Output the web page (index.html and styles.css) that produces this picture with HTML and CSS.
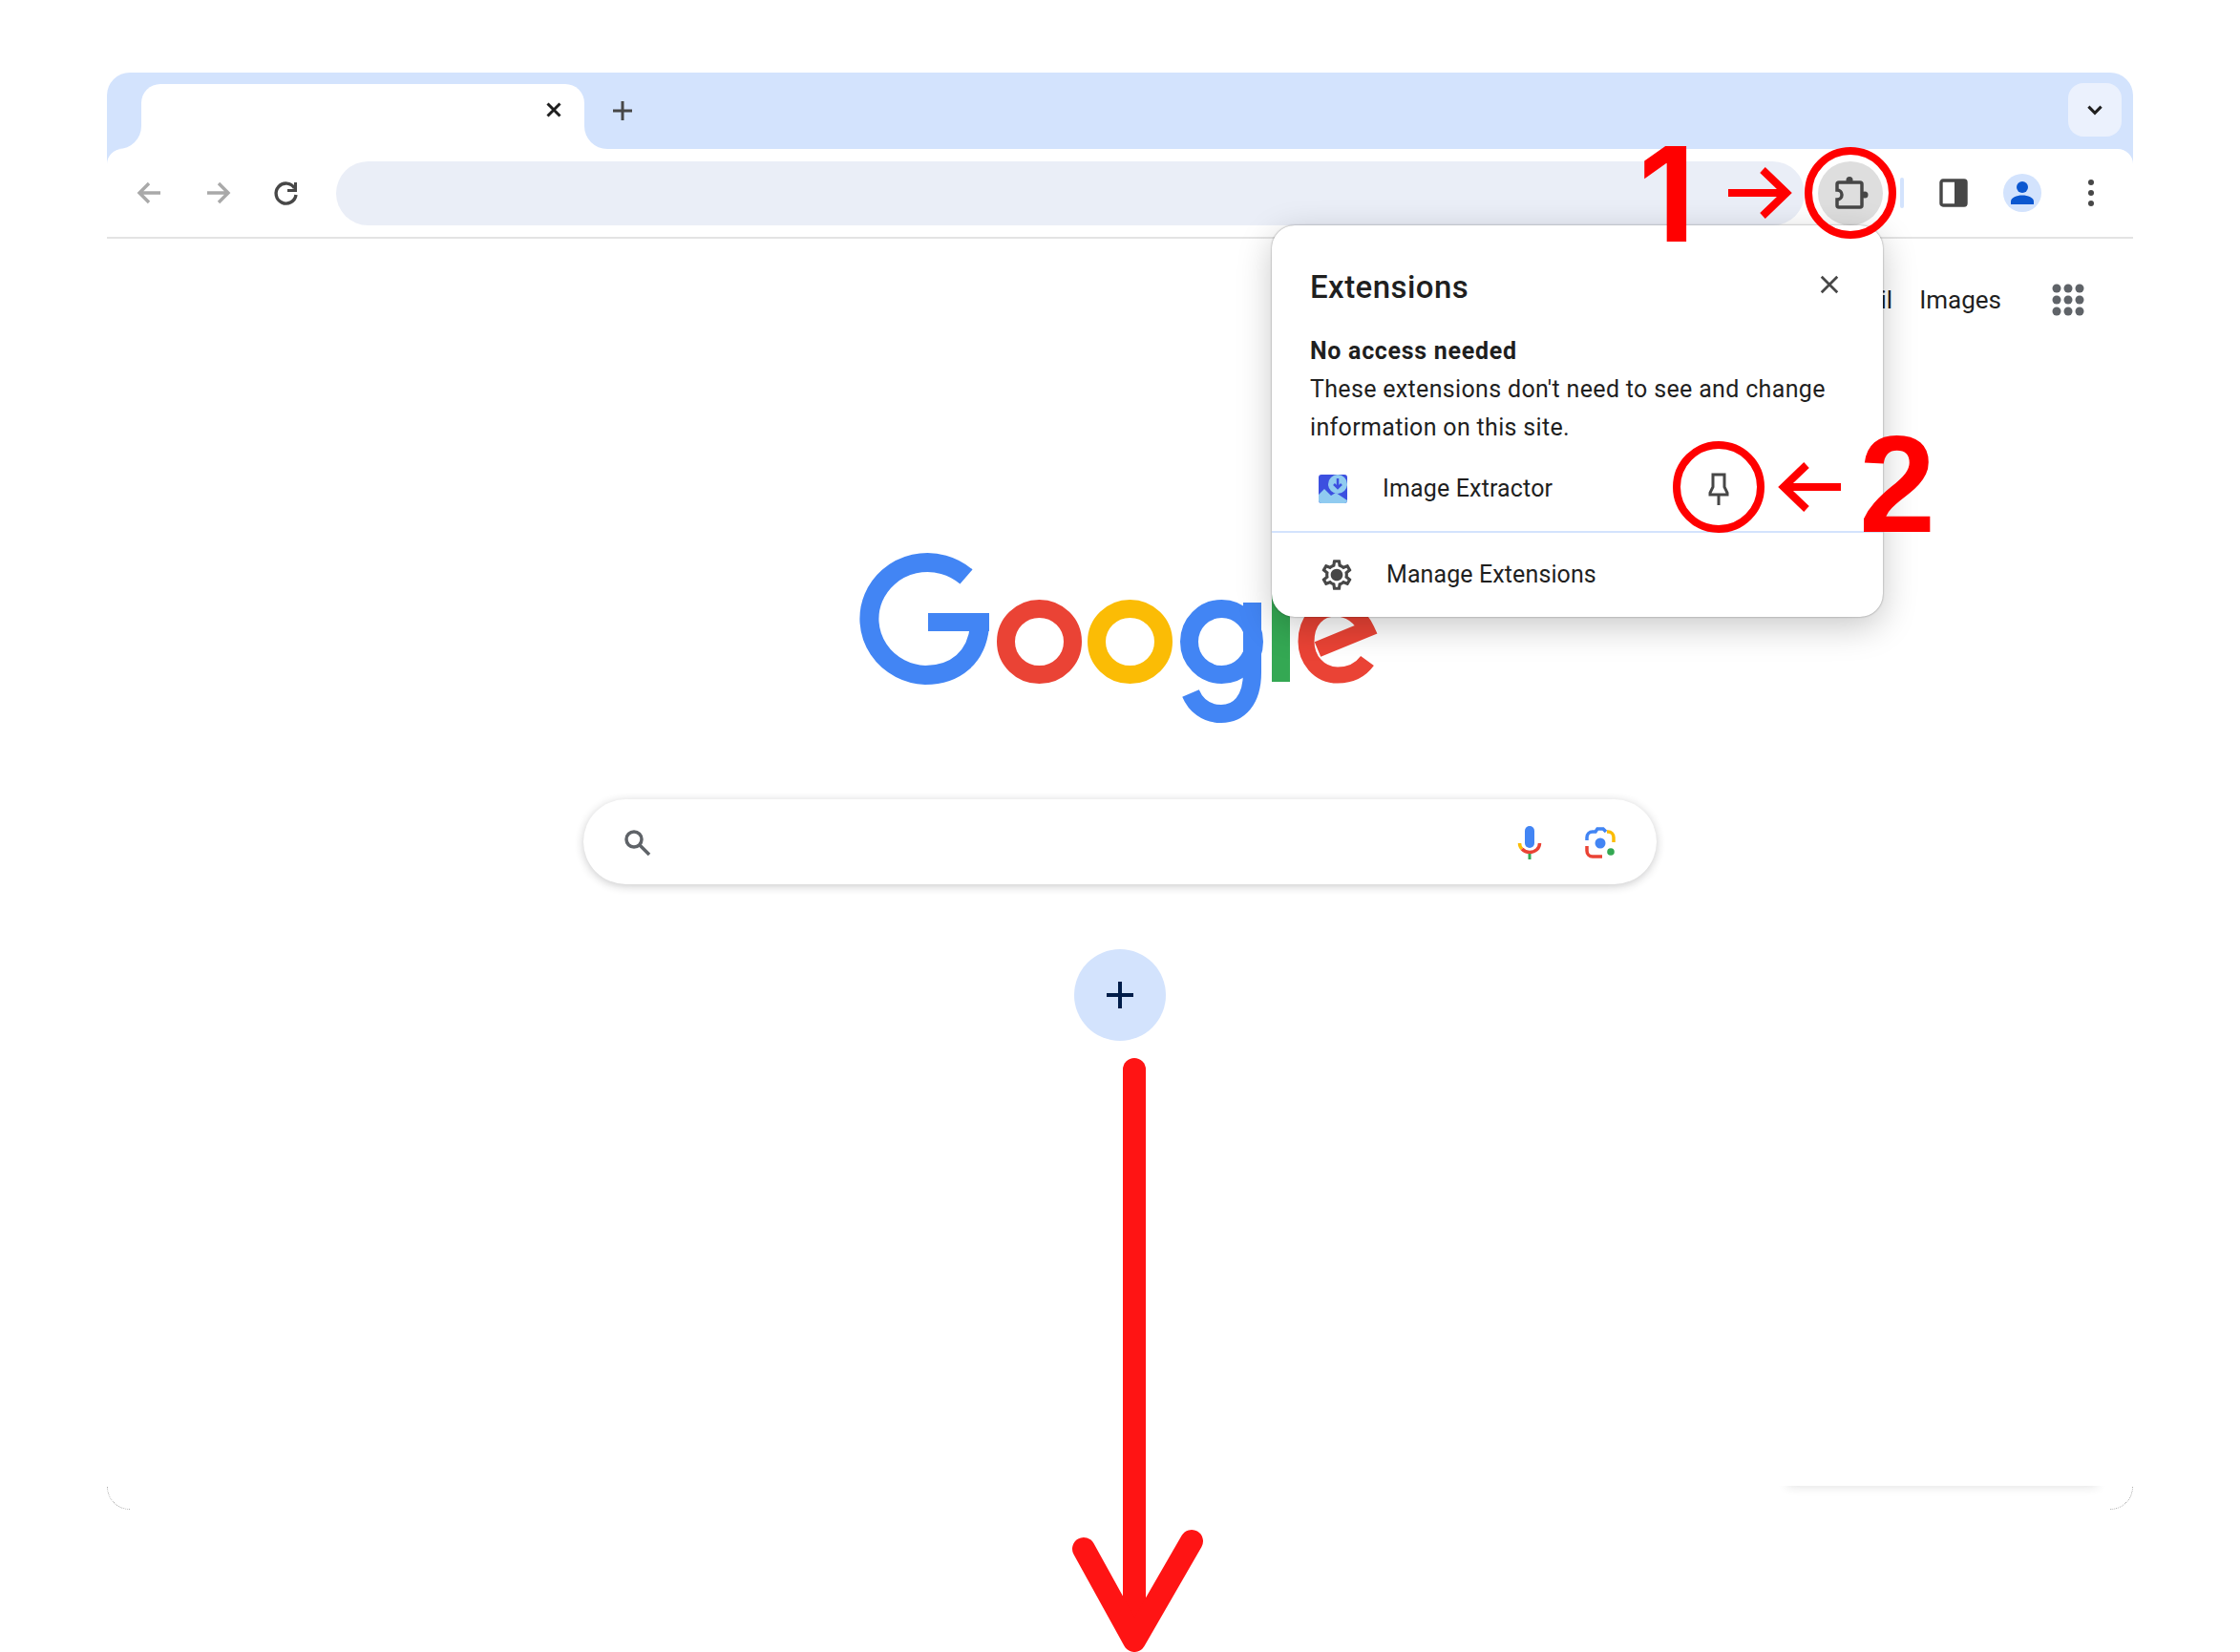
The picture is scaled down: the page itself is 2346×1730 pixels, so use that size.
FILE: index.html
```html
<!DOCTYPE html>
<html lang="en">
  <head>
    <meta charset="UTF-8" />
    <meta name="viewport" content="width=device-width, initial-scale=1.0" />
    <title>Pin an extension</title>
    <link rel="stylesheet" href="styles.css">
  </head>
  <body>
    <div class="window">
      <div class="chrome">
        <!-- Tab strip -->
        <div class="tabstrip">
          <div class="strip-left"></div>
          <div class="tab-slot">
            <div class="tab">
              <svg class="icon-close" viewBox="0 0 20 20"><path d="M3.5 3.5l13 13M16.5 3.5l-13 13" /></svg>
            </div>
          </div>
          <div class="strip-rest">
            <svg class="icon-plus" viewBox="0 0 24 24"><path d="M12 2v20M2 12h20" /></svg>
            <div class="tab-search">
              <svg viewBox="0 0 20 20"><path d="M4 7l6 6 6-6" /></svg>
            </div>
          </div>
        </div>

        <!-- Toolbar -->
        <div class="toolbar-back">
          <div class="toolbar">
            <div class="tool tool-disabled">
              <svg viewBox="0 0 32 32"><path d="M28 16H7M16 6L6 16l10 10" /></svg>
            </div>
            <div class="tool tool-disabled">
              <svg viewBox="0 0 32 32"><path d="M5 16h21M17 6l10 10-10 10" /></svg>
            </div>
            <div class="tool">
              <svg viewBox="0 0 32 32"><path d="M24.5 11A10.5 10.5 0 1 0 26 18" /><path class="solid" d="M27 5v10H17v-3h7V5z" /></svg>
            </div>
            <div class="omnibox"></div>
            <div class="extensions-btn">
              <svg viewBox="0 0 40 40">
                <path d="M8 9h22a2 2 0 0 1 2 2v22a2 2 0 0 1-2 2H8a2 2 0 0 1-2-2v-6a5 5 0 0 0 0-10v-6a2 2 0 0 1 2-2z" />
                <circle class="solid" cx="19" cy="6.5" r="3.5" />
                <circle class="solid" cx="35" cy="22" r="3.5" />
              </svg>
            </div>
            <div class="tool-sep"></div>
            <div class="tool">
              <svg viewBox="0 0 32 32">
                <rect x="3" y="3" width="26" height="26" rx="2" />
                <path class="solid" d="M17 2h10a3 3 0 0 1 3 3v22a3 3 0 0 1-3 3H17z" />
              </svg>
            </div>
            <div class="tool">
              <div class="avatar">
                <svg viewBox="0 0 40 40">
                  <circle cx="20" cy="14" r="6" />
                  <path d="M8 32v-3c0-4 6-6.500 12-6.500s12 2.500 12 6.500v3z" />
                </svg>
              </div>
            </div>
            <div class="tool">
              <svg viewBox="0 0 32 32">
                <circle class="solid" cx="16" cy="5" r="3" />
                <circle class="solid" cx="16" cy="16" r="3" />
                <circle class="solid" cx="16" cy="27" r="3" />
              </svg>
            </div>
          </div>
        </div>
      </div>

      <!-- New tab page -->
      <div class="ntp">
        <div class="ntp-nav">
          <span>Gmail</span>
          <span>Images</span>
          <svg class="apps" viewBox="0 0 48 48">
            <circle cx="12" cy="12" r="4.500" /><circle cx="24" cy="12" r="4.500" /><circle cx="36" cy="12" r="4.500" />
            <circle cx="12" cy="24" r="4.500" /><circle cx="24" cy="24" r="4.500" /><circle cx="36" cy="24" r="4.500" />
            <circle cx="12" cy="36" r="4.500" /><circle cx="24" cy="36" r="4.500" /><circle cx="36" cy="36" r="4.500" />
          </svg>
        </div>

        <svg class="logo" viewBox="0 0 546 184" role="img" aria-label="Google">
          <g fill="none">
            <path stroke="#4285f4" stroke-width="20" d="M115 28A61 59 0 1 0 72 131C104 131 126 112 129 80" />
            <path stroke="#4285f4" stroke-width="19" d="M139 75.500H75" />
            <ellipse stroke="#ea4335" stroke-width="19" cx="191.500" cy="96" rx="35" ry="34.500" />
            <ellipse stroke="#fbbc05" stroke-width="19" cx="286.500" cy="96" rx="35" ry="34.500" />
            <ellipse stroke="#4285f4" stroke-width="19" cx="382.500" cy="96" rx="34" ry="34.500" />
            <path stroke="#4285f4" stroke-width="19" d="M414.500 55V128C414.500 158 400 171.500 382 171.500C366 171.500 355 162 350 150" />
            <path stroke="#34a853" stroke-width="19" d="M444.500 14V138" />
            <path stroke="#ea4335" stroke-width="17" d="M535 116C527 127 516 131 504 131C484 131 471 114 471 96C471 74 484 61 502 61C516 61 528 70 534 83L483 104" />
          </g>
        </svg>

        <div class="searchbox">
          <svg class="icon-search" viewBox="0 0 40 40"><circle cx="17" cy="17" r="8" /><path d="M23 23l10 10" /></svg>
          <svg class="icon-mic" viewBox="0 0 40 40">
            <rect x="15" y="3" width="10" height="23" rx="5" fill="#4285f4" />
            <path stroke="#fbbc05" d="M9.500 21c0 2.500.6 4.200 2.500 6" />
            <path stroke="#ea4335" d="M12 27c2 2.300 5 3.500 8 3.500 6 0 10.500-4 10.500-9.500" />
            <rect x="18.500" y="32" width="3" height="6" fill="#34a853" />
          </svg>
          <svg class="icon-lens" viewBox="0 0 40 40">
            <path stroke="#4285f4" d="M6 18v-3c0-3.500 2.500-6 6-6h3l2-3h6l3 3" />
            <path stroke="#fbbc05" d="M27 9h1c3.500 0 6 2.500 6 6v5" />
            <path stroke="#ea4335" d="M6 24v5c0 3.500 2.500 6 6 6h10" />
            <circle cx="20" cy="21" r="5.500" fill="#4285f4" />
            <circle cx="31" cy="30" r="3.800" fill="#34a853" />
          </svg>
        </div>

        <div class="add-shortcut">
          <svg viewBox="0 0 28 28"><path d="M14 0v28M0 14h28" /></svg>
        </div>
      </div>

      <div class="customize"></div>
      <div class="corner corner-left"></div>
      <div class="corner corner-right"></div>

      <!-- Extensions menu -->
      <div class="popup">
        <div class="popup-head">
          <h2>Extensions</h2>
          <svg class="popup-close" viewBox="0 0 24 24"><path d="M3 3l18 18M21 3L3 21" /></svg>
        </div>
        <h3>No access needed</h3>
        <p>These extensions don't need to see and change<br />information on this site.</p>
        <div class="ext-row">
          <svg class="ext-icon" viewBox="0 0 30 30">
            <rect width="30" height="30" rx="3" fill="#3c50e0" />
            <path d="M0 27v-6l6-6 7 7 5-3 12 8v-1 1a3 3 0 0 1-3 3H3a3 3 0 0 1-3-3z" fill="#90cbf0" />
            <circle cx="20" cy="10" r="10" fill="#90cbf0" />
            <path d="M20 4v9M16 10l4 4 4-4" fill="none" stroke="#3c50e0" stroke-width="2.500" />
          </svg>
          <span>Image Extractor</span>
          <svg class="icon-pin" viewBox="0 0 40 40"><path d="M14 5h12v13l3 6v2H11v-2l3-6zM20 26v11" /></svg>
        </div>
        <div class="popup-divider"></div>
        <div class="manage-row">
          <svg class="icon-gear" viewBox="0 0 24 24"><path d="M19.430 12.980c.04-.32.07-.64.07-.98 0-.34-.03-.66-.07-.98l2.110-1.650c.19-.15.24-.42.12-.64l-2-3.460c-.09-.16-.26-.25-.44-.25-.06 0-.12.01-.17.03l-2.490 1c-.52-.4-1.080-.73-1.690-.98l-.38-2.650C14.460 2.180 14.250 2 14 2h-4c-.25 0-.46.18-.49.42l-.38 2.650c-.61.25-1.170.59-1.690.98l-2.490-1c-.06-.02-.12-.03-.18-.03-.17 0-.34.09-.43.25l-2 3.460c-.13.22-.07.49.12.64l2.110 1.650c-.04.32-.07.65-.07.98 0 .33.03.66.07.98l-2.110 1.650c-.19.15-.24.42-.12.64l2 3.460c.09.16.26.25.44.25.06 0 .12-.01.17-.03l2.490-1c.52.4 1.080.73 1.690.98l.38 2.650c.03.24.24.42.49.42h4c.25 0 .46-.18.49-.42l.38-2.650c.61-.25 1.170-.59 1.690-.98l2.490 1c.06.02.12.03.18.03.17 0 .34-.09.43-.25l2-3.460c.12-.22.07-.49-.12-.64l-2.110-1.650zm-1.980-1.710c.04.31.05.52.05.73 0 .21-.02.43-.05.73l-.14 1.130.89.7 1.080.84-.7 1.210-1.270-.51-1.040-.42-.9.68c-.43.32-.84.56-1.250.73l-1.060.43-.16 1.130-.2 1.350h-1.400l-.19-1.350-.16-1.130-1.060-.43c-.43-.18-.83-.41-1.230-.71l-.91-.7-1.060.43-1.270.51-.7-1.210 1.080-.84.89-.7-.14-1.130c-.03-.31-.05-.54-.05-.74s.02-.43.05-.73l.14-1.130-.89-.7-1.080-.84.7-1.210 1.270.51 1.040.42.9-.68c.43-.32.84-.56 1.250-.73l1.060-.43.16-1.130.2-1.350h1.390l.19 1.350.16 1.130 1.060.43c.43.18.83.41 1.230.71l.91.7 1.060-.43 1.270-.51.7 1.210-1.070.85-.89.7.14 1.130zM12 8c-2.210 0-4 1.790-4 4s1.790 4 4 4 4-1.790 4-4-1.790-4-4-4z" /></svg>
          <span>Manage Extensions</span>
        </div>
      </div>
    </div>

    <!-- Red annotations drawn on top of the screenshot -->
    <svg class="marks" viewBox="0 0 2346 1730">
      <circle cx="1938" cy="202" r="44" />
      <path d="M1810 202h60M1846 178l25 24-25 24" />
      <circle cx="1800" cy="510" r="44" />
      <path d="M1928 510h-60M1892 487l-24 23 24 23" />
      <path class="big-arrow" d="M1188 1120V1706" />
      <path class="big-arrow" d="M1135 1622l53 96 60-104" />
    </svg>
    <span class="step step-one">1</span>
    <span class="step step-two">2</span>
  </body>
</html>
```

FILE: styles.css
```css
body {
  position: relative;
  width: 2346px;
  height: 1730px;
  margin: 0;
  padding: 76px 112px 0;
  box-sizing: border-box;
  overflow: hidden;
  font-family: Roboto, "Liberation Sans", sans-serif;
  background-color: white;
  color: #1f1f1f;
}

.window {
  position: relative;
  height: 1505px;
}

svg {
  display: block;
  flex: none;
}

/* Tab strip and toolbar */
.chrome {
  border-radius: 24px 24px 0 0;
  overflow: hidden;
}

.tabstrip {
  display: flex;
  height: 80px;
  background-color: white;
}

.strip-left {
  width: 36px;
  background-color: #d3e3fd;
  border-bottom-right-radius: 24px;
}

.tab-slot {
  width: 464px;
  padding-top: 12px;
  box-sizing: border-box;
  background-color: #d3e3fd;
}

.tab {
  display: flex;
  justify-content: flex-end;
  height: 100%;
  padding: 17px 22px 0 0;
  box-sizing: border-box;
  background-color: white;
  border-radius: 20px 20px 0 0;
}

.icon-close {
  width: 20px;
  height: 20px;
  fill: none;
  stroke: #1f1f1f;
  stroke-width: 3;
}

.strip-rest {
  flex: 1;
  display: flex;
  justify-content: space-between;
  align-items: center;
  padding: 0 12px 1px 28px;
  background-color: #d3e3fd;
  border-bottom-left-radius: 24px;
}

.icon-plus {
  width: 24px;
  height: 24px;
  fill: none;
  stroke: #474747;
  stroke-width: 3;
}

.tab-search {
  display: flex;
  justify-content: center;
  align-items: center;
  width: 56px;
  height: 56px;
  margin-bottom: 1px;
  background-color: #ebf1fd;
  border-radius: 16px;
}

.tab-search svg {
  width: 22px;
  height: 22px;
  fill: none;
  stroke: #1f1f1f;
  stroke-width: 2.800;
}

.toolbar-back {
  background-color: #d3e3fd;
}

.toolbar {
  display: flex;
  align-items: center;
  height: 94px;
  padding: 0 8px;
  box-sizing: border-box;
  background-color: white;
  border-bottom: 2px solid #e3e3e3;
  border-radius: 16px 16px 0 0;
}

.tool {
  display: flex;
  justify-content: center;
  align-items: center;
  flex: none;
  width: 72px;
  height: 72px;
}

.tool svg {
  width: 32px;
  height: 32px;
  fill: none;
  stroke: #474747;
  stroke-width: 3.400;
}

.tool .solid,
.extensions-btn .solid {
  fill: #474747;
  stroke: none;
}

.tool-disabled svg {
  stroke: #a9a9a9;
}

.omnibox {
  flex: 1;
  height: 67px;
  margin: 0 14px 0 16px;
  background-color: #eaeef7;
  border-radius: 34px;
}

.extensions-btn {
  display: flex;
  justify-content: center;
  align-items: center;
  flex: none;
  width: 68px;
  height: 67px;
  background-color: #dedede;
  border-radius: 50%;
}

.extensions-btn svg {
  width: 40px;
  height: 40px;
  fill: none;
  stroke: #474747;
  stroke-width: 3.500;
}

.tool-sep {
  flex: none;
  width: 4px;
  height: 32px;
  margin: 0 16px 0 18px;
  background-color: #d3e3fd;
  border-radius: 2px;
}

.avatar {
  width: 40px;
  height: 40px;
  background-color: #d3e3fd;
  border-radius: 50%;
}

.tool .avatar svg {
  width: 40px;
  height: 40px;
  fill: #0b57d0;
  stroke: none;
}

/* New tab page */
.ntp {
  display: flex;
  flex-direction: column;
  align-items: center;
}

.ntp-nav {
  align-self: stretch;
  display: flex;
  justify-content: flex-end;
  align-items: center;
  gap: 28px;
  height: 48px;
  margin-top: 40px;
  padding-right: 44px;
  font-size: 26px;
}

.apps {
  width: 48px;
  height: 48px;
  margin-left: 18px;
  fill: #5f6368;
}

.logo {
  width: 546px;
  height: 184px;
  margin-top: 238px;
  margin-left: -6px;
}

.searchbox {
  display: flex;
  align-items: center;
  width: 1124px;
  height: 89px;
  margin-top: 77px;
  padding: 0 39px 0 36px;
  box-sizing: border-box;
  background-color: white;
  border-radius: 45px;
  box-shadow: 0 2px 10px rgba(32, 33, 36, 0.24);
}

.icon-search {
  width: 40px;
  height: 40px;
  margin-right: auto;
  fill: none;
  stroke: #5f6368;
  stroke-width: 3.500;
}

.icon-mic {
  width: 40px;
  height: 40px;
  fill: none;
  stroke-width: 3.500;
}

.icon-lens {
  width: 40px;
  height: 40px;
  margin-left: 34px;
  fill: none;
  stroke-width: 3.500;
}

.add-shortcut {
  display: flex;
  justify-content: center;
  align-items: center;
  width: 96px;
  height: 96px;
  margin-top: 68px;
  background-color: #d3e3fd;
  border-radius: 50%;
}

.add-shortcut svg {
  width: 28px;
  height: 28px;
  fill: none;
  stroke: #001d4a;
  stroke-width: 4;
}

.customize {
  position: absolute;
  right: 26px;
  bottom: 25px;
  width: 348px;
  height: 40px;
  background-color: white;
  box-shadow: 0 12px 12px -12px rgba(0, 0, 0, 0.14);
}

.corner {
  position: absolute;
  bottom: 0;
  width: 24px;
  height: 24px;
  box-sizing: border-box;
  border-bottom: 1px dotted #aaa;
}

.corner-left {
  left: 0;
  border-left: 1px dotted #aaa;
  border-bottom-left-radius: 24px;
}

.corner-right {
  right: 0;
  border-right: 1px dotted #aaa;
  border-bottom-right-radius: 24px;
}

/* Extensions menu */
.popup {
  position: absolute;
  left: 1220px;
  top: 160px;
  width: 640px;
  height: 410px;
  background-color: white;
  border-radius: 24px;
  box-shadow: 0 0 2px rgba(0, 0, 0, 0.45), 0 10px 36px rgba(0, 0, 0, 0.22);
  font-size: 25px;
  line-height: 40px;
  letter-spacing: 0.33px;
}

.popup-head {
  display: flex;
  justify-content: space-between;
  align-items: center;
  padding: 45px 45px 0 40px;
}

.popup h2 {
  margin: 0;
  font-size: 33px;
  font-weight: 500;
  line-height: 40px;
  letter-spacing: 0.45px;
}

.popup-close {
  width: 22px;
  height: 22px;
  margin-top: -6px;
  fill: none;
  stroke: #474747;
  stroke-width: 3;
}

.popup h3 {
  margin: 27px 0 0 40px;
  font-size: 25px;
  font-weight: 700;
  letter-spacing: 0.7px;
}

.popup p {
  margin: 0 0 0 40px;
}

.ext-row {
  display: flex;
  align-items: center;
  height: 88px;
  padding: 0 152px 0 49px;
  box-sizing: border-box;
  letter-spacing: 0.15px;
}

.ext-icon {
  width: 30px;
  height: 30px;
  margin-right: 37px;
}

.icon-pin {
  width: 40px;
  height: 40px;
  margin-left: auto;
  fill: none;
  stroke: #474747;
  stroke-width: 3;
}

.popup-divider {
  height: 2px;
  background-color: #d3e3fd;
}

.manage-row {
  display: flex;
  align-items: center;
  height: 87px;
  padding-left: 49px;
  box-sizing: border-box;
  letter-spacing: 0.1px;
}

.icon-gear {
  width: 38px;
  height: 38px;
  margin-right: 33px;
  fill: #474747;
}

/* Annotations */
.marks {
  position: absolute;
  left: 0;
  top: 0;
  width: 2346px;
  height: 1730px;
  fill: none;
  stroke: #ff0000;
  stroke-width: 8;
  pointer-events: none;
}

.big-arrow {
  stroke: #ff1414;
  stroke-width: 24;
  stroke-linecap: round;
  stroke-linejoin: round;
}

.step {
  position: absolute;
  font-size: 144px;
  font-weight: 700;
  line-height: 1;
  color: #ff0000;
}

.step-one {
  left: 1716px;
  top: 135px;
  font-family: Inter, "Liberation Sans", sans-serif;
  font-size: 137px;
}

.step-two {
  left: 1947px;
  top: 436px;
  font-family: "Liberation Sans", Arial, sans-serif;
}
```
